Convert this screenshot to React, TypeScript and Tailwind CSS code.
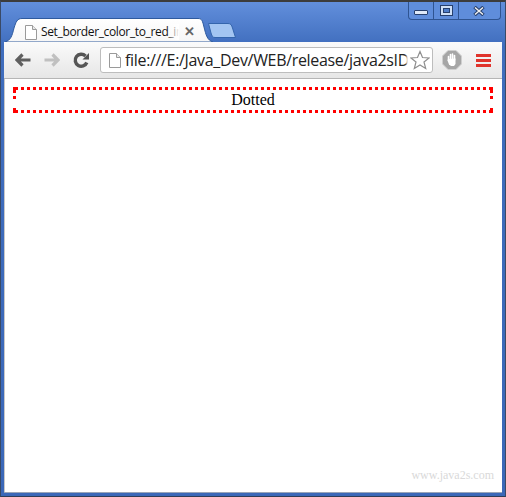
function FileIcon({ className }: { className: string }) {
  return (
    <svg className={className} viewBox="0 0 13 15" fill="none">
      <path d="M1.500 .5H8.500L12.500 4.500V14.500H1.500Z" fill="#fff" stroke="#9a9a9a" />
      <path d="M8.500 .5V4.500H12.500" fill="#e8e8e8" stroke="#9a9a9a" />
    </svg>
  )
}

function Arrow({ color, flip }: { color: string; flip?: boolean }) {
  return (
    <svg className={`w-[16px] h-[14px] ${flip ? "-scale-x-100" : ""}`} viewBox="0 0 16 14" fill="none">
      <path d="M7.500 1.500L2 7L7.500 12.500M2.500 7H15.500" stroke={color} strokeWidth="3.200" />
    </svg>
  )
}

export default function App() {
  return (
    <div className="w-[506px] h-[497px] flex flex-col overflow-hidden border-x border-b border-t-2 border-x-[#3a4a66] border-b-[#2f3d57] border-t-[#3c3c3c] bg-gradient-to-b from-[#628fdc] via-[#3f6dbd] via-[9%] to-[#3b68b8] font-['Liberation_Sans',sans-serif]">
      {/* title bar */}
      <div className="h-[40px] flex justify-between shrink-0 pl-[3px] pr-[4px]">
        <div className="relative w-[240px] h-[40px]">
          <svg className="absolute left-0 top-0 w-[240px] h-[40px]" viewBox="0 0 240 40" fill="none">
            <path d="M1 40C7 38 8 34 10 26C12 20 13 16.500 18 16.500H194C198 16.500 198.500 19 200 25C202 33 203 38 209 40Z" fill="url(#tabfill)" stroke="#2e5a9e" />
            <path d="M204.500 21.500H224C227 21.500 227.500 23 228.500 26L231.500 35.500H211C208.500 35.500 208 34 207 31Z" fill="#a3c5f2" stroke="#3465ad" />
            <defs>
              <linearGradient id="tabfill" x1="0" y1="16" x2="0" y2="40" gradientUnits="userSpaceOnUse">
                <stop stopColor="#ffffff" />
                <stop offset="1" stopColor="#f6f6f6" />
              </linearGradient>
            </defs>
          </svg>
          <div className="relative flex items-center h-[16px] mt-[22px] pl-[20px]">
            <FileIcon className="w-[13px] h-[15px] shrink-0" />
            <div className="relative ml-[4px] w-[138px] overflow-hidden whitespace-nowrap text-[12px] leading-[16px] text-[#111] font-['Open_Sans',sans-serif] tracking-[-.36px]">
              Set_border_color_to_red_in
              <div className="absolute right-0 top-0 w-[12px] h-[16px] bg-gradient-to-r from-transparent to-white" />
            </div>
            <span className="ml-[5px] text-[13px] leading-[16px] font-bold text-[#666]">✕</span>
          </div>
        </div>
        {/* window buttons */}
        <div className="flex h-[18px] w-[93px] rounded-b-[4px] border-x border-b border-[#2f5491] bg-[#5f8ddb]">
          <div className="w-[25px] flex items-center justify-center border-r border-[#2f5491]">
            <div className="w-[14px] h-[5px] mt-[4px] rounded-[1px] bg-[#dfe9f8] border border-[#27406e]" />
          </div>
          <div className="w-[25px] flex items-center justify-center border-r border-[#2f5491]">
            <div className="w-[13px] h-[11px] border border-[#27406e] bg-[#cfe0f7] flex items-center justify-center">
              <div className="w-[7px] h-[5px] bg-[#4f7ecb] border border-[#27406e]" />
            </div>
          </div>
          <div className="flex-1 flex items-center justify-center pr-[2px]">
            <svg className="w-[12px] h-[10px]" viewBox="0 0 12 10" fill="none">
              <path d="M1.500 1L10.500 9M10.500 1L1.500 9" stroke="#27406e" strokeWidth="3.500" />
              <path d="M2 1.500L10 8.500M10 1.500L2 8.500" stroke="#f2f2f2" strokeWidth="1.500" />
            </svg>
          </div>
        </div>
      </div>

      <div className="flex-1 flex flex-col mx-[3px] mb-[3px] bg-white border-b border-[#9aa5b8]">
        {/* toolbar */}
        <div className="h-[37px] shrink-0 flex items-center pl-[11px] pr-[10px] bg-gradient-to-b from-[#fbfbfb] to-[#e6e6e6] border-b border-[#b5b5b5]">
          <Arrow color="#5f5f5f" />
          <div className="ml-[13px]"><Arrow color="#c0c0c0" flip /></div>
          <svg className="ml-[13px] w-[17px] h-[17px]" viewBox="0 0 17 17" fill="none">
            <path d="M13.800 10.500A6 6 0 1 1 12.500 4" stroke="#555" strokeWidth="3.400" />
            <path d="M9.500 7.500H16V1Z" fill="#555" />
          </svg>
          <div className="ml-[10px] w-[333px] h-[26px] flex items-center pl-[7px] pr-[2px] bg-white rounded-[3px] border border-[#bdbdbd]">
            <FileIcon className="w-[13px] h-[15px] shrink-0" />
            <div className="relative ml-[4px] w-[284px] overflow-hidden whitespace-nowrap text-[16px] leading-[22px] text-[#222] font-['Open_Sans',sans-serif] tracking-[-.33px]">
              file:///E:/Java_Dev/WEB/release/java2sIDE
              <div className="absolute right-0 top-0 w-[3px] h-[22px] bg-gradient-to-r from-transparent to-white" />
            </div>
            <svg className="ml-[2px] w-[20px] h-[20px] shrink-0" viewBox="0 0 20 20" fill="#fff">
              <path d="M10 1.500L12.500 7.500L19 8L14 12L15.700 18.500L10 15L4.300 18.500L6 12L1 8L7.500 7.500Z" stroke="#8f8f8f" strokeWidth="1.200" />
            </svg>
          </div>
          <svg className="ml-[9px] w-[20px] h-[20px]" viewBox="0 0 20 20">
            <path d="M6 .5H14L19.500 6V14L14 19.500H6L.5 14V6Z" fill="#a6a6a6" stroke="#cfcfcf" />
            <path d="M6.500 10V6.500M8.500 10V4.500M10.500 10V4M12.500 10V5.500" stroke="#fff" strokeWidth="1.600" strokeLinecap="round" />
            <path d="M5.500 10.500L7 14.500L9 16H12L13.500 14V8.500L6 9Z" fill="#fff" />
          </svg>
          <div className="ml-[14px] w-[15px] flex flex-col gap-[2px]">
            <div className="h-[3px] bg-[#e0342c]" />
            <div className="h-[3px] bg-[#e0342c]" />
            <div className="h-[3px] bg-[#e0342c]" />
          </div>
        </div>

        {/* page */}
        <div className="flex-1 flex flex-col px-[8px] pt-[8px] pb-[9px] bg-white border-l border-[#c8c8c8] font-['Liberation_Serif',serif]">
          <div className="h-[26px] w-[480px] p-[3px] text-center text-[16px] leading-[20px] text-black [background:repeating-linear-gradient(90deg,transparent_0_2px,#f00_2px_5px,transparent_5px_6px)_top/100%_3px_no-repeat,repeating-linear-gradient(90deg,transparent_0_2px,#f00_2px_5px,transparent_5px_6px)_bottom/100%_3px_no-repeat,linear-gradient(180deg,#f00_0_6px,transparent_6px_9px,#f00_9px_12px,transparent_12px_21px,#f00_21px_26px)_left/3px_100%_no-repeat,linear-gradient(180deg,#f00_0_6px,transparent_6px_9px,#f00_9px_12px,transparent_12px_21px,#f00_21px_26px)_right/3px_100%_no-repeat]">
            Dotted
          </div>
          <div className="mt-auto text-right text-[12px] leading-[15px] text-[#d9d9d9]">www.java2s.com</div>
        </div>
      </div>
    </div>
  )
}
